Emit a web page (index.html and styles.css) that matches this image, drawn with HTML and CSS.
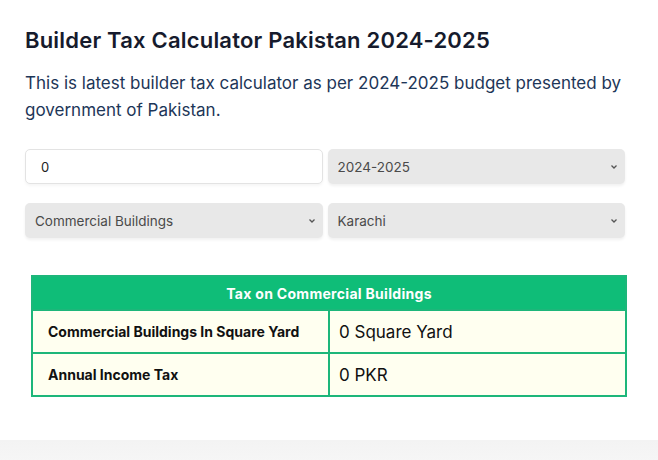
FILE: index.html
```html
<!DOCTYPE html>
<html lang="en">
<head>
    <meta charset="UTF-8">
    <meta name="viewport" content="width=device-width, initial-scale=1.0">
    <title>Builder Tax Calculator Pakistan 2024-2025</title>
    <link rel="stylesheet" href="styles.css">
</head>
<body>
    <div class="calculator">
        <h1>Builder Tax Calculator Pakistan 2024-2025</h1>
        <p class="intro">This is latest builder tax calculator as per 2024-2025 budget presented by government of Pakistan.</p>

        <div class="fields">
            <input type="text" id="area" value="0">

            <div class="select-box">
                <select id="year">
                    <option>2024-2025</option>
                    <option>2023-2024</option>
                </select>
                <svg class="chevron" width="8" height="6" viewBox="0 0 8 6"><path d="M1.5 1.5 L4 4 L6.5 1.5" fill="none" stroke="#555" stroke-width="1.3"/></svg>
            </div>

            <div class="select-box">
                <select id="type">
                    <option>Commercial Buildings</option>
                    <option>Residential Buildings</option>
                </select>
                <svg class="chevron" width="8" height="6" viewBox="0 0 8 6"><path d="M1.5 1.5 L4 4 L6.5 1.5" fill="none" stroke="#555" stroke-width="1.3"/></svg>
            </div>

            <div class="select-box">
                <select id="city">
                    <option>Karachi</option>
                    <option>Lahore</option>
                    <option>Islamabad</option>
                </select>
                <svg class="chevron" width="8" height="6" viewBox="0 0 8 6"><path d="M1.5 1.5 L4 4 L6.5 1.5" fill="none" stroke="#555" stroke-width="1.3"/></svg>
            </div>
        </div>

        <table class="result">
            <thead>
                <tr><th colspan="2">Tax on Commercial Buildings</th></tr>
            </thead>
            <tbody>
                <tr>
                    <td class="label">Commercial Buildings In Square Yard</td>
                    <td class="value" id="areaOut">0 Square Yard</td>
                </tr>
                <tr>
                    <td class="label">Annual Income Tax</td>
                    <td class="value" id="taxOut">0 PKR</td>
                </tr>
            </tbody>
        </table>
    </div>
    <div class="next-section"></div>
</body>
</html>
```

FILE: styles.css
```css
body{
    margin: 0;
    font-family: Inter, "Open Sans", sans-serif;
    background-color: #fff;
}
.calculator{
    padding: 24px 33px 43px 25px;
}
h1{
    font-size: 22px;
    font-weight: 600;
    letter-spacing: 0.2px;
    color: #161b2d;
    margin: 0 0 14px;
    line-height: 32px;
}
.intro{
    font-size: 17px;
    line-height: 27px;
    color: #1d3658;
    margin: 0 0 25px;
}
/* 입력 필드 2열 그리드 */
.fields{
    display: grid;
    grid-template-columns: 1fr 1fr;
    column-gap: 5px;
    row-gap: 19px;
}
#area{
    height: 35px;
    box-sizing: border-box;
    border: 1px solid #e3e3e3;
    border-radius: 5px;
    padding: 0 15px;
    font-family: inherit;
    font-size: 13px;
    color: #222;
    box-shadow: 0 2px 3px rgba(0, 0, 0, 0.04);
    outline: none;
}
.select-box{
    position: relative;
}
.select-box select{
    appearance: none;
    width: 100%;
    height: 35px;
    border: none;
    border-radius: 5px;
    background-color: #e8e8e8;
    padding: 0 10px;
    font-family: inherit;
    font-size: 13.5px;
    color: #4a4a4a;
    box-shadow: 0 2px 3px rgba(0, 0, 0, 0.06);
}
.chevron{
    position: absolute;
    right: 7px;
    top: 15px;
    pointer-events: none;
}
/* 결과 테이블 */
.result{
    margin: 37px 0 0 6px;
    width: 596px;
    border-collapse: collapse;
    background-color: #fffff0;
}
.result th{
    background-color: #0fbd78;
    color: #fff;
    font-size: 14px;
    font-weight: 700;
    letter-spacing: 0.3px;
    height: 32px;
    padding: 0;
    border: 2px solid #1db67a;
}
.result td{
    border: 2px solid #1db67a;
    height: 41px;
    width: 50%;
}
.label{
    font-size: 14px;
    font-weight: 700;
    color: #111;
    padding: 0 15px;
}
.value{
    font-size: 17px;
    color: #111;
    padding: 0 9px;
}
.next-section{
    height: 30px;
    background: linear-gradient(#f3f3f3, #f7f7f7);
}
```
